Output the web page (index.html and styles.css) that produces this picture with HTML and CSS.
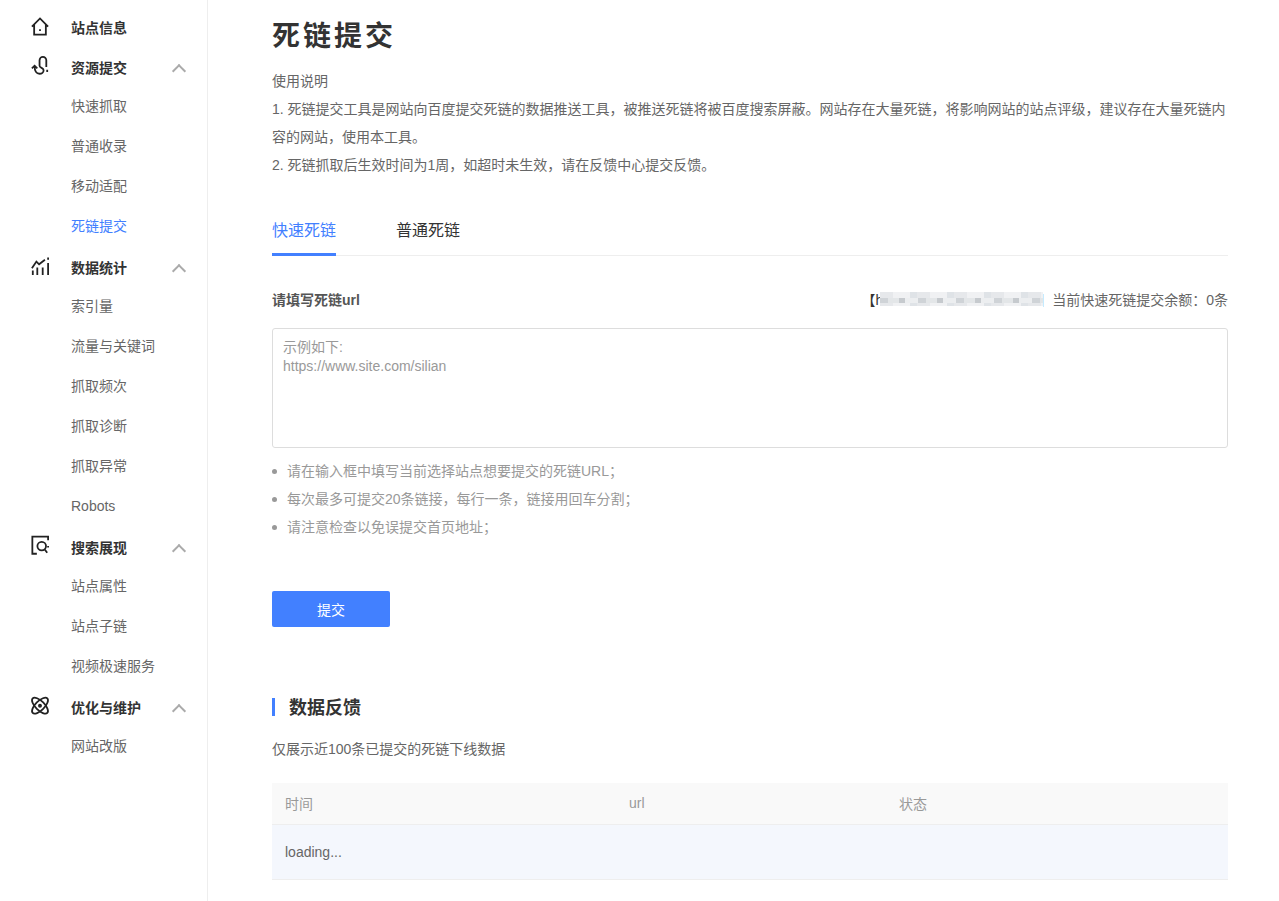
FILE: index.html
```html
<!DOCTYPE html>
<html lang="zh-CN">
<head>
  <meta charset="UTF-8" />
  <title>死链提交</title>
  <link rel="stylesheet" href="styles.css">
</head>
<body>
<aside class="sidebar">
  <div class="nav-group">
    <svg class="nav-icon" viewBox="0 0 20 20"><path d="M1 9.500 10 0.500 19 9.500M3.500 7.500V18.500H16.500V7.500M9 13.500h2"/></svg>
    <span>站点信息</span>
  </div>
  <div class="nav-group">
    <svg class="nav-icon" viewBox="0 0 20 20"><path d="M1 11.500 4 8.500 7 11.500M4 9.500c0 4.500 2 8 5.500 8 2.500 0 4.500-1.700 4.500-4 0-2.500-4.500-2.500-4.500-5V2.500a3.200 3.200 0 0 1 7.500 0V10M18 13v2.500"/></svg>
    <span>资源提交</span>
    <i class="chevron"></i>
  </div>
  <a class="nav-item">快速抓取</a>
  <a class="nav-item">普通收录</a>
  <a class="nav-item">移动适配</a>
  <a class="nav-item active">死链提交</a>
  <div class="nav-group">
    <svg class="nav-icon" viewBox="0 0 20 20"><path d="M1 11.500 6 4 9 7 15.500 2M2 14v5M7 10.500V19M13 10.500V19M19 5.500V19M19 -0.500V2"/></svg>
    <span>数据统计</span>
    <i class="chevron"></i>
  </div>
  <a class="nav-item">索引量</a>
  <a class="nav-item">流量与关键词</a>
  <a class="nav-item">抓取频次</a>
  <a class="nav-item">抓取诊断</a>
  <a class="nav-item">抓取异常</a>
  <a class="nav-item">Robots</a>
  <div class="nav-group">
    <svg class="nav-icon" viewBox="0 0 20 20"><path d="M19 2.500V-1.500H1.500V17.500H6.500M11.900 13.800a4.800 4.800 0 1 0 0-9.600 4.800 4.800 0 0 0 0 9.600ZM15.500 13 18 16.500M19 9v1.500"/></svg>
    <span>搜索展现</span>
    <i class="chevron"></i>
  </div>
  <a class="nav-item">站点属性</a>
  <a class="nav-item">站点子链</a>
  <a class="nav-item">视频极速服务</a>
  <div class="nav-group">
    <svg class="nav-icon" viewBox="0 0 20 20">
      <ellipse cx="10" cy="8.500" rx="11.500" ry="5" transform="rotate(45 10 8.500)"/>
      <ellipse cx="10" cy="8.500" rx="11.500" ry="5" transform="rotate(-45 10 8.500)"/>
      <circle cx="10" cy="8.500" r="1.200"/>
    </svg>
    <span>优化与维护</span>
    <i class="chevron"></i>
  </div>
  <a class="nav-item">网站改版</a>
</aside>

<main class="content">
  <h1>死链提交</h1>
  <div class="intro">
    <p>使用说明</p>
    <p>1. 死链提交工具是网站向百度提交死链的数据推送工具，被推送死链将被百度搜索屏蔽。网站存在大量死链，将影响网站的站点评级，建议存在大量死链内容的网站，使用本工具。</p>
    <p>2. 死链抓取后生效时间为1周，如超时未生效，请在反馈中心提交反馈。</p>
  </div>

  <div class="tabs">
    <a class="tab active">快速死链</a>
    <a class="tab">普通死链</a>
  </div>

  <div class="form-head">
    <b>请填写死链url</b>
    <div class="quota">
      <span class="site">【h<span class="blur"></span>】</span>
      <span>当前快速死链提交余额：0条</span>
    </div>
  </div>
  <textarea class="url-box" placeholder="示例如下:&#10;https://www.site.com/silian"></textarea>
  <ul class="tips">
    <li>请在输入框中填写当前选择站点想要提交的死链URL；</li>
    <li>每次最多可提交20条链接，每行一条，链接用回车分割；</li>
    <li>请注意检查以免误提交首页地址；</li>
  </ul>
  <button class="submit">提交</button>

  <h2>数据反馈</h2>
  <p class="note">仅展示近100条已提交的死链下线数据</p>
  <div class="table">
    <div class="row head">
      <span class="col-time">时间</span>
      <span class="col-url">url</span>
      <span>状态</span>
    </div>
    <div class="row body">loading...</div>
  </div>
</main>
</body>
</html>
```

FILE: styles.css
```css
:root {
  --azul: #4280ff;
  --preto: #333;
  --texto: #666;
  --cinza: #999;
}

* { box-sizing: border-box; margin: 0; padding: 0; }

body {
  font-family: "Liberation Sans", "Noto Sans CJK SC", sans-serif;
  font-size: 14px;
  color: var(--texto);
  background: #fff;
  display: flex;
  height: 901px;
  overflow: hidden;
}

.sidebar {
  width: 208px;
  flex-shrink: 0;
  border-right: 1px solid #eee;
  padding-top: 7px;
}

.nav-group {
  height: 40px;
  display: flex;
  align-items: center;
  padding-left: 31px;
  font-weight: bold;
  color: var(--preto);
  font-size: 14px;
}

.nav-icon {
  width: 18px;
  height: 18px;
  margin-right: 22px;
  fill: none;
  stroke: #222;
  stroke-width: 2;
  overflow: visible;
}

.chevron {
  width: 10px;
  height: 10px;
  margin-left: auto;
  margin-right: 23px;
  margin-top: 7px;
  border-left: 2px solid #aaa;
  border-top: 2px solid #aaa;
  transform: rotate(45deg);
}

.nav-item {
  display: block;
  height: 40px;
  line-height: 38px;
  padding-left: 71px;
  color: var(--texto);
}

.nav-item.active { color: var(--azul); }

.content {
  width: 956px;
  margin-left: 64px;
  padding-top: 17px;
}

h1 {
  font-size: 28px;
  line-height: 40px;
  color: var(--preto);
  letter-spacing: 3px;
}

.intro {
  margin-top: 10px;
  line-height: 28px;
}

.tabs {
  display: flex;
  gap: 60px;
  margin-top: 27px;
  border-bottom: 1px solid #eee;
  height: 50px;
}

.tab {
  font-size: 16px;
  line-height: 50px;
  color: var(--preto);
  height: 50px;
}

.tab.active {
  color: var(--azul);
  border-bottom: 3px solid var(--azul);
}

.form-head {
  display: flex;
  justify-content: space-between;
  align-items: center;
  margin-top: 33px;
  height: 20px;
}

.form-head b { color: #555; }

.quota { display: flex; align-items: center; }

.site { color: var(--preto); display: flex; align-items: center; }

.blur {
  display: inline-block;
  position: relative;
  z-index: 1;
  width: 163px;
  height: 18px;
  margin: 0 -5px 0 -3px;
  filter: blur(0.7px);
  background:
    repeating-linear-gradient(90deg, #cfd3d7 0 8px, #e3e6e8 8px 19px, #c6cace 19px 25px, #eceef0 25px 38px) 0 8px / 100% 5px no-repeat,
    repeating-linear-gradient(90deg, #e6e8eb 0 13px, #f0f1f3 13px 30px, #dfe3e7 30px 37px) 0 2px / 100% 14px no-repeat,
    #fff;
}

.url-box {
  display: block;
  width: 100%;
  height: 120px;
  margin-top: 19px;
  padding: 9px 10px;
  border: 1px solid #ddd;
  border-radius: 3px;
  font: inherit;
  line-height: 19px;
  resize: none;
  outline: none;
}

.url-box::placeholder { color: var(--cinza); opacity: 1; }

.tips {
  margin-top: 9px;
  list-style: none;
  color: var(--cinza);
  line-height: 28px;
}

.tips li {
  display: flex;
  align-items: center;
  gap: 10px;
}

.tips li::before {
  content: "";
  width: 5px;
  height: 5px;
  border-radius: 50%;
  background: var(--cinza);
}

.submit {
  display: block;
  width: 118px;
  height: 36px;
  margin-top: 50px;
  background: var(--azul);
  color: #fff;
  border: none;
  border-radius: 2px;
  font: inherit;
}

h2 {
  margin-top: 71px;
  font-size: 18px;
  line-height: 20px;
  height: 18px;
  color: var(--preto);
  padding-left: 14px;
  border-left: 3px solid var(--azul);
}

.note {
  margin-top: 23px;
  line-height: 20px;
}

.table { margin-top: 24px; }

.row {
  display: flex;
  align-items: center;
  padding-left: 13px;
  border-bottom: 1px solid #eee;
}

.row.head {
  height: 42px;
  padding-bottom: 2px;
  background: #f9f9f9;
  color: var(--cinza);
}

.row.body {
  height: 55px;
  background: #f4f7fd;
}

.col-time { width: 344px; }
.col-url { width: 270px; }
```
